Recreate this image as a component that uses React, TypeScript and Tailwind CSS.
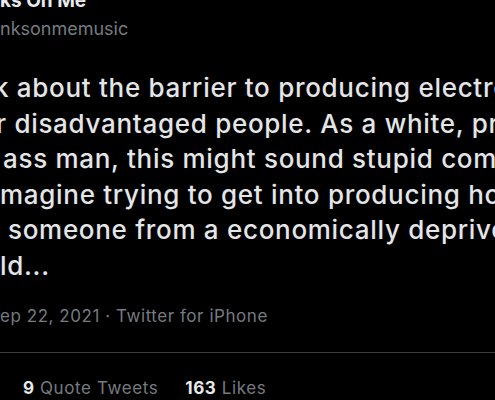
const lines = [
  { text: "k about the barrier to producing electronic", shift: "-ml-[6px]" },
  { text: "r disadvantaged people. As a white, privileged,", shift: "-ml-[4px]" },
  { text: "ass man, this might sound stupid coming", shift: "ml-[3px]" },
  { text: "magine trying to get into producing house", shift: "ml-0" },
  { text: "someone from a economically deprived", shift: "ml-[8px]" },
  { text: "ld...", shift: "ml-0" },
];

export default function App() {
  return (
    <div
      className="w-[495px] h-[400px] overflow-hidden bg-black"
      style={{ fontFamily: "Inter, 'Liberation Sans', sans-serif" }}
    >
      {/* author */}
      <div className="-mt-[11px]">
        <div className="text-[19px] leading-[24px] font-bold text-[#e7e9ea] whitespace-nowrap">
          ks On Me
        </div>
        <div className="mt-[4px] text-[18px] leading-[24px] text-[#767b80] whitespace-nowrap">
          nksonmemusic
        </div>
      </div>

      {/* tweet body */}
      <div className="mt-[29px] text-[26px] leading-[35.6px] font-medium tracking-[0.7px] text-[#e3e5e6]">
        {lines.map((l) => (
          <div key={l.text} className={`whitespace-nowrap ${l.shift}`}>
            {l.text}
          </div>
        ))}
      </div>

      {/* meta */}
      <div className="mt-[21px] text-[17px] leading-[22px] tracking-[0.55px] text-[#767b80] whitespace-nowrap">
        ep 22, 2021 · Twitter for iPhone
      </div>

      <div className="mt-[25px] h-px bg-[#3a3d40]" />

      <div className="mt-[24px] flex gap-[27px] text-[17px] leading-[22px] tracking-[0.6px] whitespace-nowrap pl-[23px]">
        <span className="text-[#767b80]">
          <span className="font-bold text-[#e7e9ea]">9</span> Quote Tweets
        </span>
        <span className="text-[#767b80]">
          <span className="font-bold text-[#e7e9ea]">163</span> Likes
        </span>
      </div>
    </div>
  );
}
